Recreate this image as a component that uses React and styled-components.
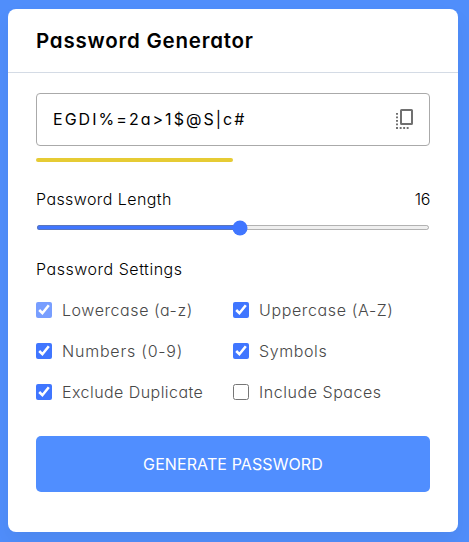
import React, { useState } from "react";
import styled, { createGlobalStyle } from "styled-components";

const Global = createGlobalStyle`
  * { box-sizing: border-box; margin: 0; padding: 0; }
  body {
    background: #508efb;
    font-family: "Inter", "Liberation Sans", sans-serif;
    font-feature-settings: "cv11" 1;
    color: #000;
    overflow: hidden;
  }
`;

const Page = styled.main`
  height: 542px;
  padding: 9px 11px 10px 8px;
`;

const Card = styled.section`
  width: 450px;
  height: 523px;
  background: #fff;
  border-radius: 8px;
  box-shadow: 0 10px 20px rgba(0, 0, 0, 0.05);
`;

const Title = styled.h1`
  height: 64px;
  padding: 0 28px;
  line-height: 64px;
  border-bottom: 1px solid #d4dbe5;
  font-size: 20.5px;
  font-weight: 600;
`;

const Text = styled.span`
  letter-spacing: ${(p) => p.$track || 0}px;
  white-space: pre;
`;

const Body = styled.div`
  display: flex;
  flex-direction: column;
  padding: 20px 28px 0;
`;

const Output = styled.div`
  display: flex;
  align-items: center;
  justify-content: space-between;
  height: 53px;
  padding: 0 15px 0 16px;
  border: 1px solid #aaa;
  border-radius: 4px;
  font-size: 16px;
`;

const Password = styled(Text)`
  padding-bottom: 2px;
`;

const CopyIcon = styled.svg`
  display: block;
  width: 20px;
  height: 23px;
  fill: #707070;
`;

const Strength = styled.div`
  width: 50%;
  height: 4px;
  margin-top: 12px;
  border-radius: 4px;
  background: #e6cb34;
`;

const Row = styled.div`
  display: flex;
  justify-content: space-between;
  height: 24px;
  margin-top: ${(p) => p.$gap}px;
  line-height: 24px;
  font-size: 16px;
  font-weight: 300;
`;

const Range = styled.input`
  display: block;
  width: 394px;
  height: 5px;
  margin-top: 14px;
  accent-color: #4076ff;
`;

const Options = styled.ul`
  display: grid;
  grid-template-columns: 1fr 1fr;
  grid-auto-rows: 41px;
  margin-top: 11px;
  list-style: none;
`;

const Option = styled.label`
  display: flex;
  align-items: center;
  height: 36px;
  gap: 10px;
  color: #484848;
  font-size: 16px;
  font-weight: 300;
`;

const Check = styled.input`
  width: 16px;
  height: 16px;
  flex: none;
  accent-color: #4076ff;
  opacity: ${(p) => (p.$locked ? 0.7 : 1)};
  pointer-events: ${(p) => (p.$locked ? "none" : "auto")};
`;

const Generate = styled.button`
  height: 56px;
  margin-top: 21px;
  border: 0;
  border-radius: 5px;
  background: #508eff;
  color: #fff;
  font: inherit;
  font-size: 16px;
  font-weight: 400;
`;

const options = [
  { label: "Lowercase (a-z)", on: true, locked: true, track: 0.57 },
  { label: "Uppercase (A-Z)", on: true, track: 0.64 },
  { label: "Numbers (0-9)", on: true, track: 0.79 },
  { label: "Symbols", on: true, track: 0.6 },
  { label: "Exclude Duplicate", on: true, track: 0.45 },
  { label: "Include Spaces", on: false, track: 0.55 },
];

export default function App() {
  const [length, setLength] = useState(16);
  return (
    <>
      <Global />
      <Page>
        <Card>
          <Title><Text $track={0.78}>Password Generator</Text></Title>
          <Body>
            <Output>
              <Password $track={2.03}>{"EGDI%=2a>1$@S|c#"}</Password>
              <CopyIcon viewBox="0 0 20 23">
                <path fillRule="evenodd" d="M7.5 1h10A1.5 1.5 0 0 1 19 2.5v13a1.5 1.5 0 0 1-1.5 1.5h-10A1.5 1.5 0 0 1 6 15.500v-13A1.500 1.500 0 0 1 7.500 1zM8 3v12h9V3z" />
                <path d="M2 5h2v1.800H2zM2 8.500h2v1.800H2zM2 12h2v1.800H2zM2 15.500h2v1.800H2zM2 19h2v2H2zM5.700 19h1.900v2H5.700zM9.200 19h1.900v2H9.200zM12.700 19h1.900v2h-1.900z" />
              </CopyIcon>
            </Output>
            <Strength />
            <Row $gap={25}><Text $track={0.42}>Password Length</Text><Text $track={-0.3}>{length}</Text></Row>
            <Range type="range" min="1" max="30" value={length} onChange={(e) => setLength(e.target.value)} />
            <Row $gap={27}><Text $track={0.53}>Password Settings</Text></Row>
            <Options>
              {options.map((o) => (
                <li key={o.label}>
                  <Option>
                    <Check type="checkbox" defaultChecked={o.on} $locked={o.locked} />
                    <Text $track={o.track}>{o.label}</Text>
                  </Option>
                </li>
              ))}
            </Options>
            <Generate><Text $track={0.1}>GENERATE PASSWORD</Text></Generate>
          </Body>
        </Card>
      </Page>
    </>
  );
}
